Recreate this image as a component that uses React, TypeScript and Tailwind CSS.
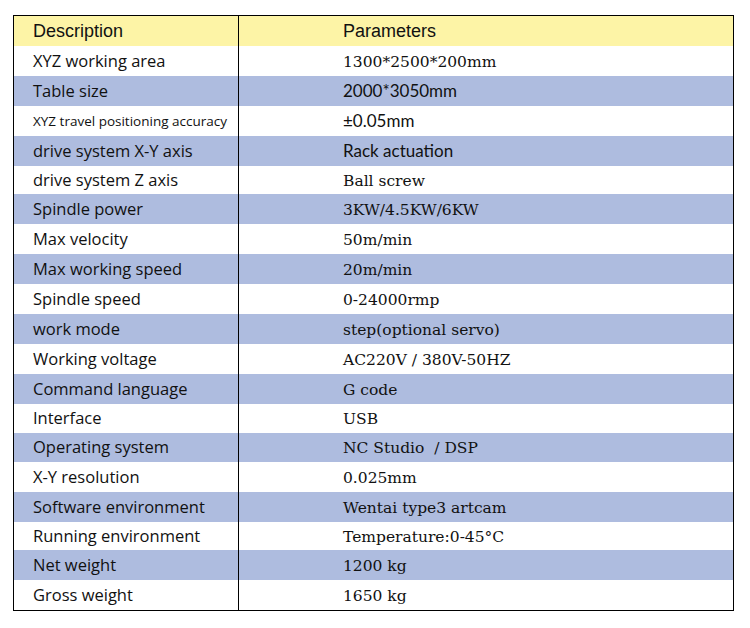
type Row = {
  label: string;
  value: string;
  h: number;
  shade?: boolean;
  small?: boolean;
  sansValue?: boolean;
};

const rows: Row[] = [
  { label: "XYZ working area", value: "1300*2500*200mm", h: 30 },
  { label: "Table size", value: "2000*3050mm", h: 30, shade: true, sansValue: true },
  { label: "XYZ travel positioning accuracy", value: "±0.05mm", h: 30, small: true, sansValue: true },
  { label: "drive system X-Y axis", value: "Rack actuation", h: 30, shade: true, sansValue: true },
  { label: "drive system Z axis", value: "Ball screw", h: 28 },
  { label: "Spindle power", value: "3KW/4.5KW/6KW", h: 30, shade: true },
  { label: "Max velocity", value: "50m/min", h: 30 },
  { label: "Max working speed", value: "20m/min", h: 30, shade: true },
  { label: "Spindle speed", value: "0-24000rmp", h: 30 },
  { label: "work mode", value: "step(optional servo)", h: 30, shade: true },
  { label: "Working voltage", value: "AC220V / 380V-50HZ", h: 30 },
  { label: "Command language", value: "G code", h: 30, shade: true },
  { label: "Interface", value: "USB", h: 29 },
  { label: "Operating system", value: "NC Studio  / DSP", h: 29, shade: true },
  { label: "X-Y resolution", value: "0.025mm", h: 30 },
  { label: "Software environment", value: "Wentai type3 artcam", h: 30, shade: true },
  { label: "Running environment", value: "Temperature:0-45°C", h: 28 },
  { label: "Net weight", value: "1200 kg", h: 30, shade: true },
  { label: "Gross weight", value: "1650 kg", h: 30 },
];

export default function App() {
  return (
    <div className="w-[750px] h-[628px] bg-white pt-[15px] pl-[13px]">
      <div className="w-[721px] border border-black text-[#111]">
        {/* header */}
        <div className="flex h-[30px] bg-[#fdf4a6] font-['Liberation_Sans',Arial,sans-serif] text-[18px]">
          <div className="w-[225px] border-r border-black flex items-center pl-[19px]">
            Description
          </div>
          <div className="flex-1 flex items-center pl-[104px]">Parameters</div>
        </div>

        {rows.map((r) => (
          <div
            key={r.label}
            className={`flex ${r.shade ? "bg-[#aebcdf]" : "bg-white"}`}
            style={{ height: r.h }}
          >
            <div
              className={`w-[225px] border-r border-black flex items-center pl-[19px] font-['Open_Sans',sans-serif] ${
                r.small ? "text-[13.5px]" : "text-[16.5px]"
              }`}
            >
              {r.label}
            </div>
            <div
              className={`flex-1 flex items-center pl-[104px] whitespace-pre ${
                r.sansValue
                  ? "font-['Lato',sans-serif] text-[17px]"
                  : "font-['DejaVu_Serif','Liberation_Serif',serif] text-[15.5px] pt-[3px]"
              }`}
            >
              {r.value}
            </div>
          </div>
        ))}
      </div>
    </div>
  );
}
